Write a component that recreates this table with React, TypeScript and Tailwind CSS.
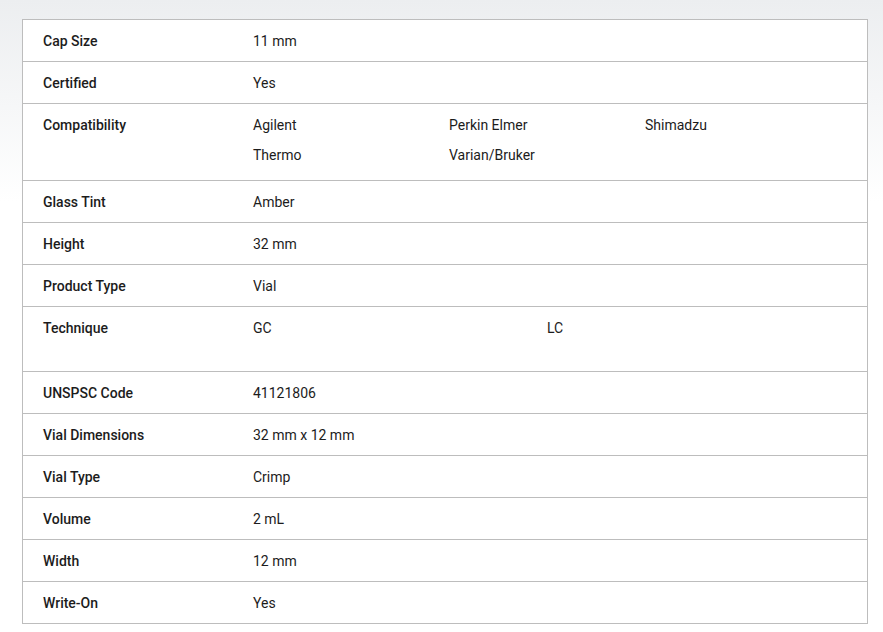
import React from 'react';

type Spec = {
  label: string;
  values: string[];
  cols?: number;
  height?: string;
};

const specs: Spec[] = [
  { label: 'Cap Size', values: ['11 mm'] },
  { label: 'Certified', values: ['Yes'] },
  {
    label: 'Compatibility',
    values: ['Agilent', 'Perkin Elmer', 'Shimadzu', 'Thermo', 'Varian/Bruker'],
    cols: 3,
    height: 'h-[77px]',
  },
  { label: 'Glass Tint', values: ['Amber'] },
  { label: 'Height', values: ['32 mm'] },
  { label: 'Product Type', values: ['Vial'] },
  { label: 'Technique', values: ['GC', 'LC'], cols: 2, height: 'h-[65px]' },
  { label: 'UNSPSC Code', values: ['41121806'] },
  { label: 'Vial Dimensions', values: ['32 mm x 12 mm'] },
  { label: 'Vial Type', values: ['Crimp'] },
  { label: 'Volume', values: ['2 mL'] },
  { label: 'Width', values: ['12 mm'] },
  { label: 'Write-On', values: ['Yes'] },
];

function SpecRow({ label, values, cols, height }: Spec) {
  // multi-value rows wrap into a grid and align to the top
  if (cols) {
    return (
      <div className={`flex items-start border-b border-[#bdbdbd] pt-[6px] ${height}`}>
        <div className="w-[230px] shrink-0 pl-5 leading-[30px] font-medium">{label}</div>
        <div className={`grid w-[588px] content-start ${cols === 3 ? 'grid-cols-3' : 'grid-cols-2'}`}>
          {values.map((v) => (
            <div key={v} className="leading-[30px]">{v}</div>
          ))}
        </div>
      </div>
    );
  }

  return (
    <div className="flex h-[42px] items-center border-b border-[#bdbdbd] pt-[2px]">
      <div className="w-[230px] shrink-0 pl-5 font-medium">{label}</div>
      <div>{values[0]}</div>
    </div>
  );
}

export default function App() {
  return (
    <div className="min-h-[632px] w-full bg-gradient-to-b from-[#eceef0] from-0% to-white to-[32%] pt-[19px] pl-[22px]">
      <div
        className="w-[846px] border-x border-t border-[#bdbdbd] bg-white text-[14px] text-[#1c1c1c]"
        style={{ fontFamily: 'Roboto, "Liberation Sans", sans-serif' }}
      >
        {specs.map((s) => (
          <SpecRow key={s.label} {...s} />
        ))}
      </div>
    </div>
  );
}
